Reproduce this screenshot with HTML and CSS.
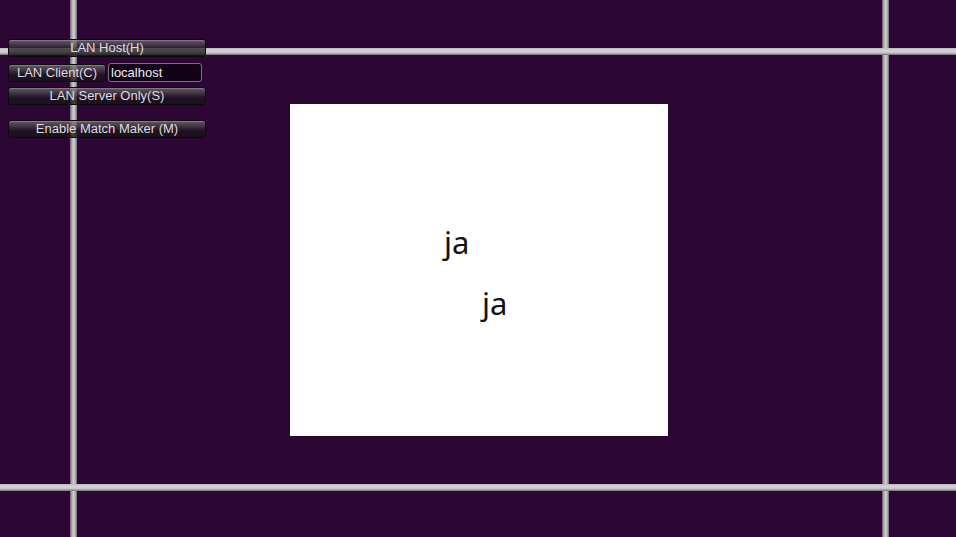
FILE: index.html
```html
<!DOCTYPE html>
<html>
<head>
<meta charset="utf-8">
<link rel="stylesheet" href="styles.css">
</head>
<body>
<div class="scene">
  <div class="line vline v1"></div>
  <div class="line vline v2"></div>
  <div class="line hline h1"></div>
  <div class="line hline h2"></div>

  <div class="canvas">
    <div class="canvas-text t1">ja</div>
    <div class="canvas-text t2">ja</div>
  </div>

  <div class="menu">
    <div class="btn">LAN Host(H)</div>
    <div class="row">
      <div class="btn btn-client">LAN Client(C)</div>
      <div class="field">localhost</div>
    </div>
    <div class="btn">LAN Server Only(S)</div>
    <div class="btn btn-mm">Enable Match Maker (M)</div>
  </div>
</div>
</body>
</html>
```
FILE: styles.css
```css
html, body {
  margin: 0;
  padding: 0;
}
body {
  background: #2d0733;
  width: 956px;
  height: 537px;
  overflow: hidden;
  font-family: "Liberation Sans", Arial, sans-serif;
}
.scene {
  position: relative;
  width: 956px;
  height: 537px;
}
.line {
  position: absolute;
}
.vline {
  top: 0;
  bottom: 0;
  width: 7px;
  background: linear-gradient(to right, #655a68, #aaa5ac 25%, #cfcccf 50%, #b4afb5 75%, #6c626e);
}
.v1 { left: 70px; }
.v2 { left: 882px; }
.hline {
  left: 0;
  right: 0;
  height: 7px;
  background: linear-gradient(to bottom, #bdbabe, #d6d4d6 35%, #c6c3c6 70%, #746a76);
}
.h1 { top: 48px; }
.h2 { top: 484px; }

.canvas {
  position: absolute;
  left: 290px;
  top: 104px;
  width: 378px;
  height: 332px;
  background: #ffffff;
  font-family: "Noto Sans", "Open Sans", sans-serif;
  font-size: 31px;
  color: #111;
}
.canvas-text {
  position: absolute;
  line-height: 1;
}
.t1 { left: 154px; top: 123px; }
.t2 { left: 192px; top: 184px; }

.menu {
  position: absolute;
  left: 8px;
  top: 39px;
  width: 198px;
  display: flex;
  flex-direction: column;
}
.btn {
  height: 16px;
  border: 1px solid #0c0a0d;
  border-radius: 3px;
  background: linear-gradient(to bottom, rgba(120,118,122,0.75) 0%, rgba(70,66,72,0.7) 35%, rgba(28,24,30,0.75) 60%, rgba(22,18,24,0.8) 100%);
  box-shadow: inset 0 1px 0 rgba(160,158,162,0.5);
  color: #dedcde;
  font-size: 13px;
  line-height: 16px;
  text-align: center;
  white-space: nowrap;
}
.row {
  display: flex;
  gap: 2px;
  margin-top: 6px;
  align-items: flex-start;
}
.btn-client {
  width: 96px;
  margin-top: 1px;
  flex: none;
}
.field {
  width: 90px;
  height: 17px;
  border: 1px solid #7a727c;
  border-radius: 3px;
  background: rgba(14,2,18,0.85);
  color: #eeecee;
  font-size: 13px;
  line-height: 17px;
  padding-left: 2px;
  box-sizing: content-box;
}
.menu > .btn:nth-child(3) {
  margin-top: 5px;
}
.btn-mm {
  margin-top: 15px;
}
```
